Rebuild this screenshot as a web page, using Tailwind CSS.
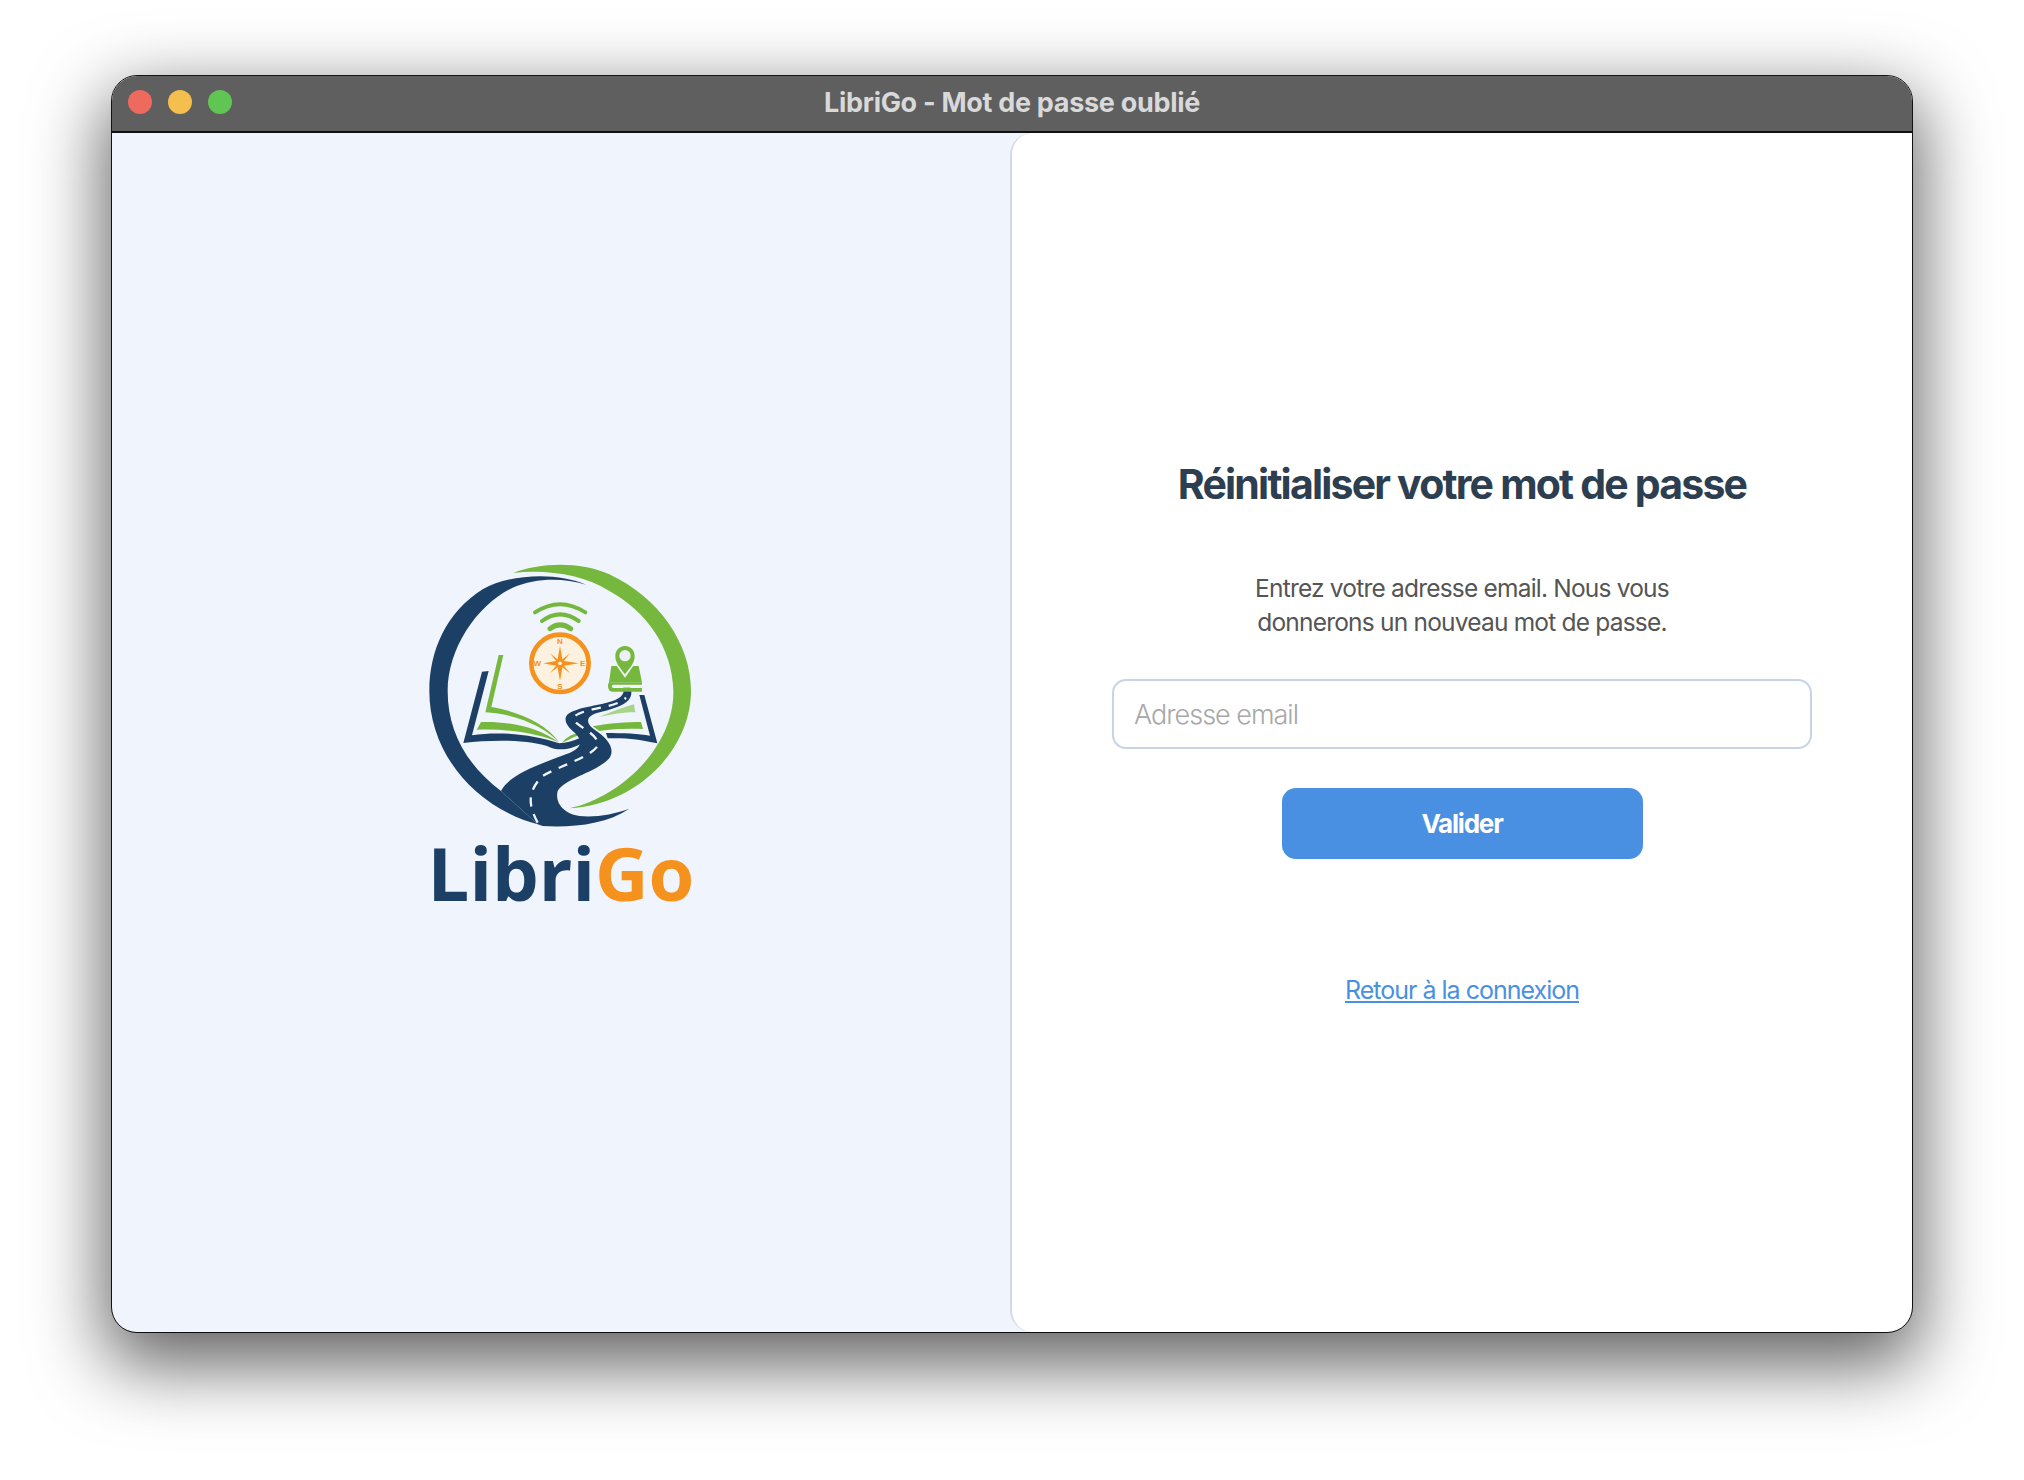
<!DOCTYPE html>
<html lang="fr">
<head>
    <meta charset="UTF-8">
    <title>LibriGo - Mot de passe oublié</title>
    <script src="https://cdn.jsdelivr.net/npm/@tailwindcss/browser@4"></script>
</head>
<body class="bg-white min-h-screen font-['Inter',sans-serif] overflow-hidden">
    <div class="ml-[112px] mt-[76px] w-[1800px] h-[1256px] flex flex-col rounded-[25px] overflow-hidden outline-1 outline-black/90 shadow-[0_26px_72px_7px_rgba(0,0,0,0.62)]">
        <!-- Title bar -->
        <div class="relative h-[57px] shrink-0 flex items-center justify-center bg-[#5f5f5f] border-b-2 border-[#111]">
            <div class="absolute left-[16px] top-[14px] flex gap-[16px]">
                <span class="w-6 h-6 rounded-full bg-[#ee6a5f]"></span>
                <span class="w-6 h-6 rounded-full bg-[#f5bf4f]"></span>
                <span class="w-6 h-6 rounded-full bg-[#61c554]"></span>
            </div>
            <span class="text-[27px] font-bold text-[#d9d9d9] tracking-[-0.3px]">LibriGo - Mot de passe oublié</span>
        </div>

        <div class="flex flex-1 bg-[#f0f4fc]">
            <!-- Left panel: logo -->
            <div class="w-[898px] shrink-0 flex flex-col items-center justify-center pt-[8px]">
                <svg viewBox="80 60 810 810" width="270" height="270" class="block">
                    <!-- green swoosh -->
                    <path fill="#76b83e" d="M342 96C420 65 540 60 630 100C780 170 875 310 875 450C875 620 720 790 510 802C660 770 825 620 822 450C820 320 740 210 630 150C550 100 440 85 342 96Z"/>
                    <!-- navy ring -->
                    <path fill="#1c3f66" d="M560 131C480 95 340 95 250 145C140 215 90 330 90 450C90 640 230 800 415 850L305 750C200 670 145 570 145 450C145 320 235 190 340 140C410 110 490 110 560 131Z"/>
                    <!-- book, green pages -->
                    <path fill="#76b83e" d="M298 342L312 342L276 498C350 510 440 545 480 605C440 560 350 518 258 514Z"/>
                    <path fill="#76b83e" d="M245 543C330 540 420 560 478 604C420 577 320 562 232 566Z"/>
                    <path fill="#76b83e" d="M488 605C500 590 515 580 532 578L535 584C518 590 503 598 488 605Z"/>
                    <path fill="#76b83e" d="M580 556C630 546 680 543 725 543L731 564C680 562 640 564 600 570Z"/>
                    <path fill="#a9d588" d="M600 528C640 510 670 500 704 490L708 514C670 514 640 520 600 528Z"/>
                    <!-- book, navy cover -->
                    <path fill="#1c3f66" d="M248 392L268 390L218 583C300 570 400 580 480 607C500 607 520 600 540 592L548 606C520 625 480 630 455 620C400 595 280 595 192 606Z"/>
                    <path fill="#1c3f66" d="M720 462L735 462L774 607C720 595 680 590 625 592L620 576C670 576 720 578 752 584Z"/>
                    <!-- road -->
                    <path fill="#1c3f66" d="M305 750C330 700 420 670 500 640C560 620 545 590 520 570C490 545 490 518 530 508C580 488 685 490 672 440L693 440C712 490 640 504 590 517C562 527 558 545 582 563C622 590 650 620 630 652C590 695 500 710 475 750C465 790 500 820 540 825C590 830 640 820 690 803C620 850 520 860 430 855L415 850Z"/>
                    <path fill="none" stroke="#f0f4fc" stroke-width="7" stroke-dasharray="28 24" d="M415 845C385 790 385 750 430 705C480 675 570 650 595 615C600 585 560 570 530 545C510 525 540 515 580 505C620 497 660 490 680 470"/>
                    <!-- wifi arcs -->
                    <g fill="none" stroke="#76b83e" stroke-linecap="round">
                        <path stroke-width="12" d="M407 214Q482 165 558 214"/>
                        <path stroke-width="12" d="M428 240Q482 200 538 240"/>
                        <path stroke-width="15" d="M452 263Q482 240 514 263"/>
                    </g>
                    <!-- compass -->
                    <circle cx="482" cy="367" r="86" fill="#fdf1df" stroke="#f5921e" stroke-width="14"/>
                    <path fill="#f5921e" d="M482 315L490 359L538 367L490 375L482 420L474 375L432 367L474 359Z"/>
                    <path fill="#f5921e" d="M452 337L482 361L512 337L488 367L512 397L482 373L452 397L476 367Z"/>
                    <circle cx="482" cy="367" r="7" fill="#fdf1df" stroke="#f5921e" stroke-width="3"/>
                    <g fill="#f5921e" font-family="Liberation Sans, sans-serif" font-size="24" font-weight="700" text-anchor="middle">
                        <text x="482" y="308">N</text>
                        <text x="482" y="445">S</text>
                        <text x="550" y="376">E</text>
                        <text x="414" y="376">W</text>
                    </g>
                    <!-- pin on a book -->
                    <path fill="#76b83e" d="M636 375L718 375L728 424L640 424C630 424 625 432 626 444Z"/>
                    <path fill="#76b83e" d="M626 432C626 426 632 424 640 424L728 424L728 431L642 431C636 431 636 440 642 441L728 441L728 452L640 452C630 452 626 445 626 432Z"/>
                    <path fill="#f0f4fc" d="M677 410L640 358L714 358Z"/>
                    <path fill="#76b83e" d="M677 400C660 378 648 365 648 345C648 328 661 315 677 315C693 315 706 328 706 345C706 365 694 378 677 400Z"/>
                    <circle cx="677" cy="344" r="17" fill="#eef0f6"/>
                </svg>
                <div class="mt-[2px] text-[74px] leading-[80px] font-bold font-['Open_Sans',sans-serif] text-[#1c3f66]">Libri<span class="text-[#f5921e]">Go</span></div>
            </div>

            <!-- Right panel: form -->
            <div class="flex-1 flex flex-col items-center justify-center bg-white rounded-l-[22px] border-l-2 border-[#d3d9e6]">
                <h1 class="text-[41px] leading-[52px] font-bold text-[#2c3e50] tracking-[-1.8px]">Réinitialiser votre mot de passe</h1>
                <p class="mt-[61px] text-[24.5px] leading-[34px] text-[#555] text-center tracking-[-0.8px]">Entrez votre adresse email. Nous vous<br>donnerons un nouveau mot de passe.</p>
                <input type="text" placeholder="Adresse email" class="mt-[40px] w-[700px] h-[70px] px-[20px] text-[27px] font-light tracking-[-1px] border-2 border-[#c8d4e6] rounded-[14px] bg-white outline-none placeholder:text-[#a8a8a8]">
                <button class="mt-[39px] w-[361px] h-[71px] rounded-[14px] bg-[#4a90e2] text-white text-[26px] font-bold tracking-[-1.2px]">Valider</button>
                <a href="#" class="mt-[114px] text-[25px] leading-[34px] text-[#4a90e2] underline tracking-[-1px]">Retour à la connexion</a>
            </div>
        </div>
    </div>
</body>
</html>
